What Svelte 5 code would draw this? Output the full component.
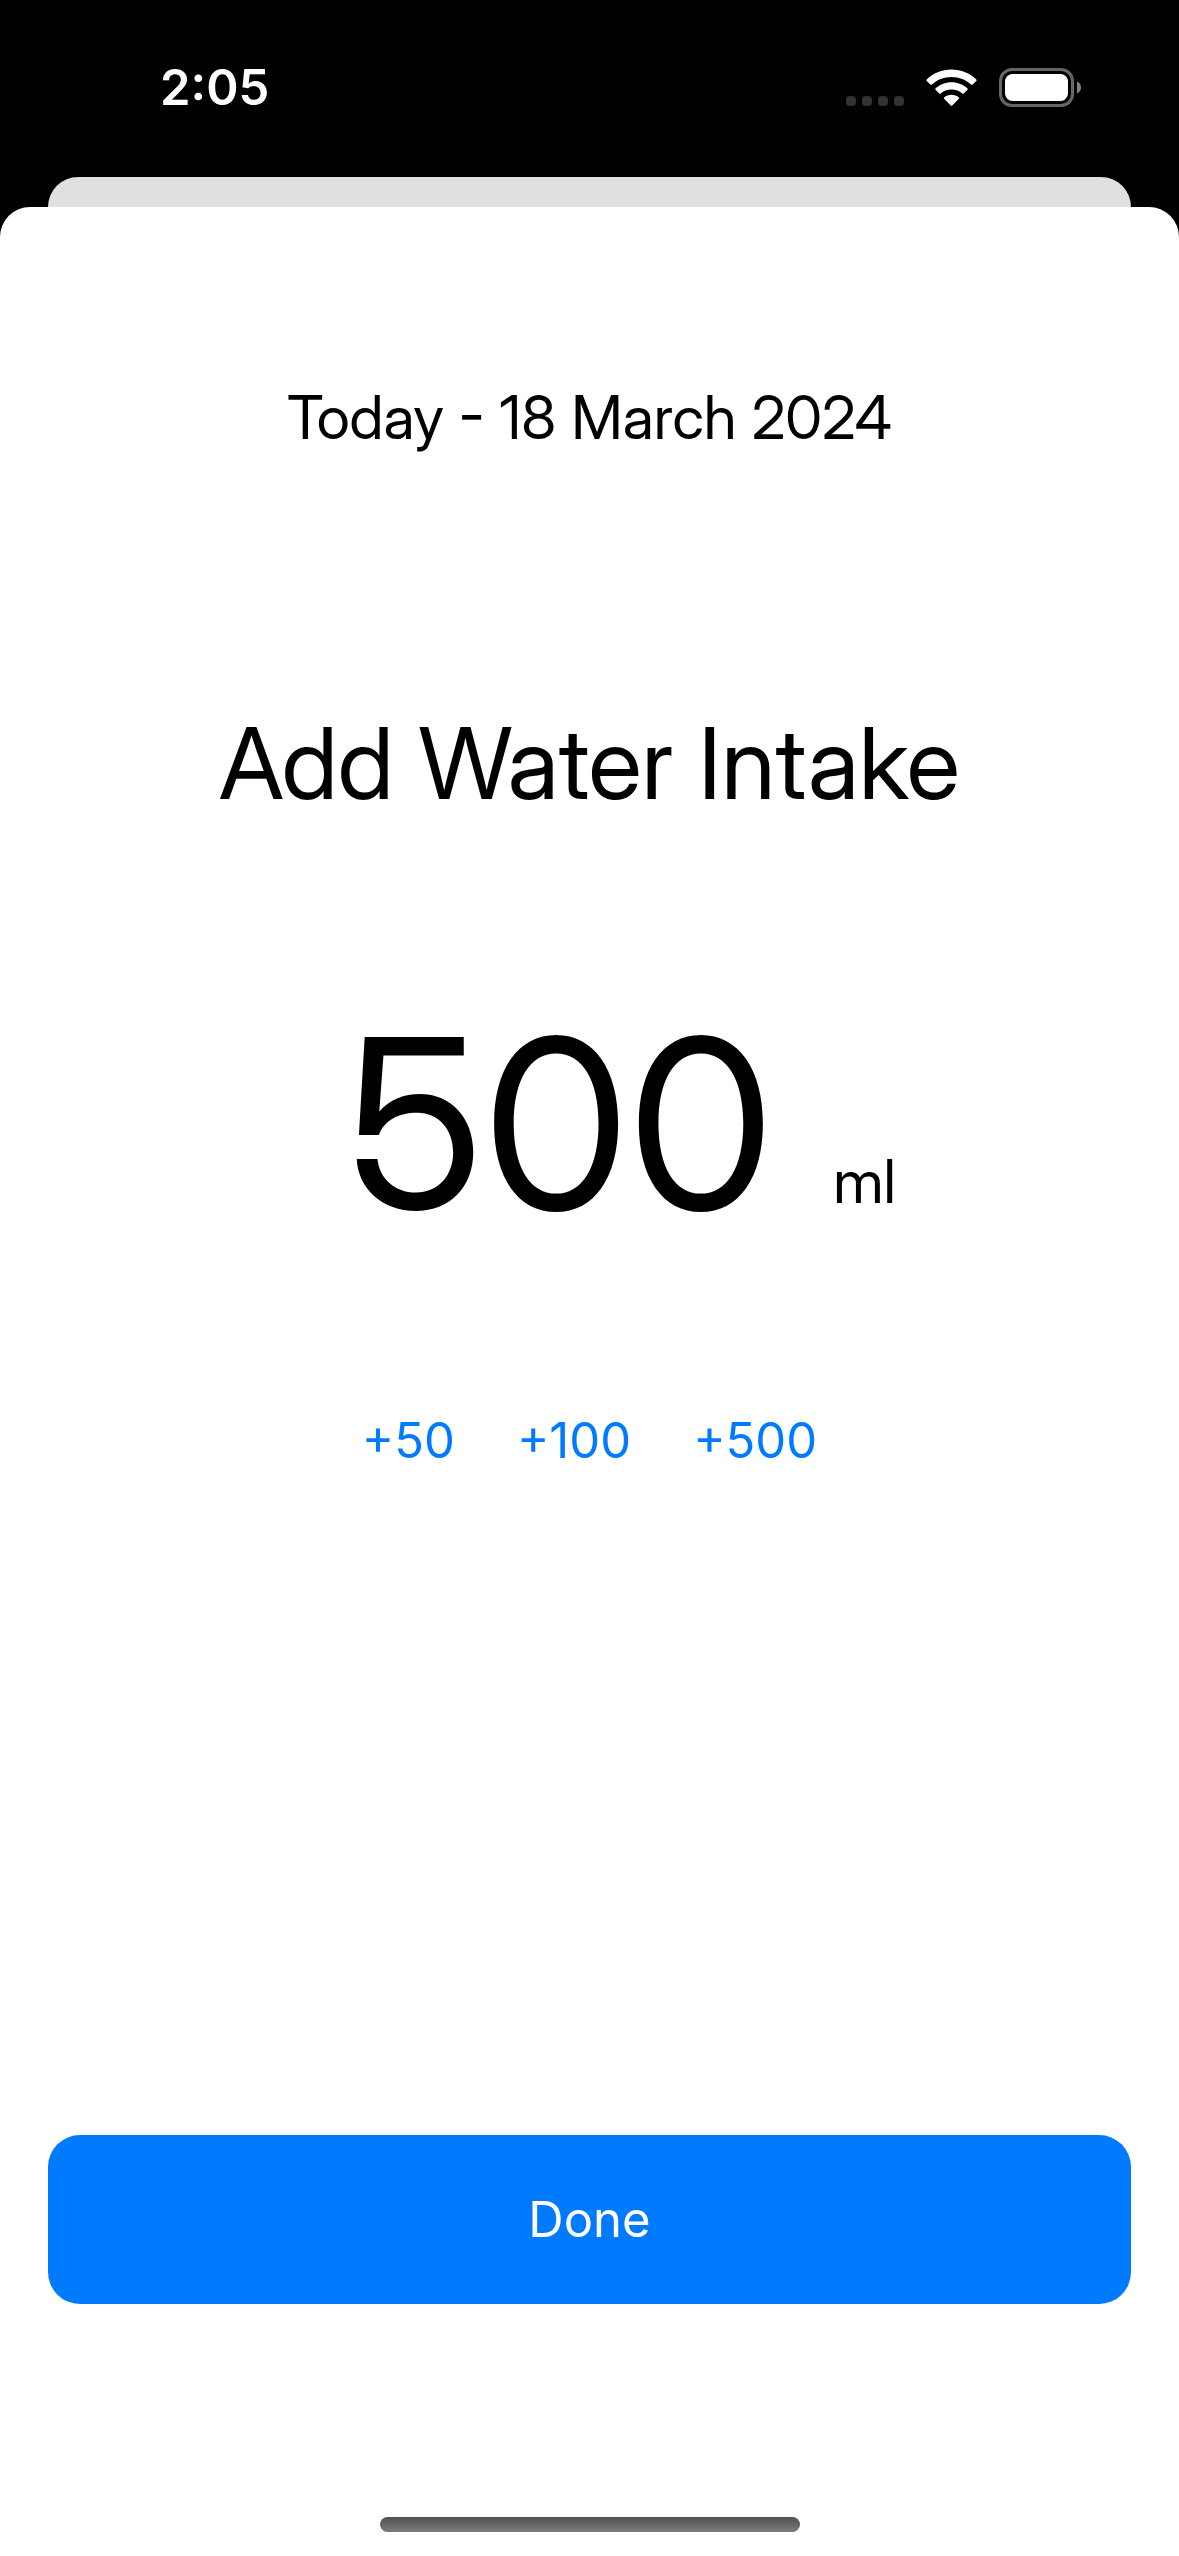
<script>
  let amount = $state('500');
  const steps = [50, 100, 500];

  function add(step) {
    amount = String((parseInt(amount, 10) || 0) + step);
  }
</script>

<div class="screen">
  <header class="status">
    <time class="clock">2:05</time>
    <div class="indicators">
      <svg class="cell" viewBox="0 0 58 10" aria-hidden="true">
        <rect x="0" y="0" width="10" height="10" rx="4" />
        <rect x="16" y="0" width="10" height="10" rx="4" />
        <rect x="32" y="0" width="10" height="10" rx="4" />
        <rect x="48" y="0" width="10" height="10" rx="4" />
      </svg>
      <svg class="wifi" viewBox="0 0 51 38" aria-hidden="true">
        <path d="M25.500 0.600C35.200 0.600 44 4.400 50.300 10.500Q51 11.200 50.300 11.900L46.600 15.600Q45.900 16.300 45.200 15.600C40 10.800 33.200 8 25.500 8C17.800 8 11 10.800 5.800 15.600Q5.100 16.300 4.400 15.600L0.700 11.900Q0 11.200 0.700 10.500C7 4.400 15.800 0.600 25.500 0.600Z" />
        <path d="M25.500 13.200C31.700 13.200 37.300 15.600 41.500 19.400Q42.200 20.100 41.500 20.800L37.700 24.500Q37 25.200 36.300 24.500C33.500 22 29.700 20.500 25.500 20.500C21.300 20.500 17.500 22 14.700 24.500Q14 25.200 13.300 24.500L9.500 20.800Q8.800 20.100 9.500 19.400C13.700 15.600 19.300 13.200 25.500 13.200Z" />
        <path d="M25.500 25.800C28.300 25.800 30.900 26.800 32.900 28.400Q33.600 29.100 32.900 29.800L26.200 36.600Q25.500 37.300 24.800 36.600L18.100 29.800Q17.400 29.100 18.100 28.400C20.100 26.800 22.700 25.800 25.500 25.800Z" />
      </svg>
      <svg class="battery" viewBox="0 0 82 40" aria-hidden="true">
        <rect class="shell" x="1.500" y="1.500" width="72" height="36" rx="11.500" />
        <rect class="charge" x="6" y="6" width="63" height="27" rx="7.500" />
        <path class="tip" d="M78 13.500C80.500 14.500 82 16.800 82 19.500S80.500 24.500 78 25.500Z" />
      </svg>
    </div>
  </header>

  <div class="behind"></div>

  <main class="sheet">
    <p class="date">Today - 18 March 2024</p>
    <h1 class="title">Add Water Intake</h1>
    <div class="entry">
      <input id="amount" class="amount" type="text" inputmode="numeric" bind:value={amount} />
      <label class="unit" for="amount">ml</label>
    </div>
    <div class="steps">
      {#each steps as step}
        <button type="button" class="step" onclick={() => add(step)}>+{step}</button>
      {/each}
    </div>
    <button type="button" class="done">Done</button>
    <div class="home"></div>
  </main>
</div>

<style>
  :global(body) {
    background: #000;
  }

  .screen {
    display: flex;
    flex-direction: column;
    min-height: 100vh;
    background: #000;
    color: #000;
    font-family: Inter, 'Liberation Sans', sans-serif;
  }

  button,
  input {
    margin: 0;
    padding: 0;
    border: 0;
    background: none;
    color: inherit;
    font: inherit;
  }

  .status {
    box-sizing: border-box;
    display: flex;
    align-items: center;
    justify-content: space-between;
    height: 177px;
    padding: 0 98px 1px 160px;
    color: #fff;
  }

  .clock {
    font-size: 49px;
    font-weight: 600;
    line-height: 60px;
  }

  .indicators {
    display: flex;
    align-items: center;
    gap: 22px;
  }

  .cell {
    width: 58px;
    height: 10px;
    align-self: flex-end;
    margin-bottom: 2px;
    fill: #333;
  }

  .wifi {
    width: 51px;
    height: 38px;
    fill: #fff;
  }

  .battery {
    width: 82px;
    height: 40px;
  }

  .shell {
    fill: none;
    stroke: #666;
    stroke-width: 3;
  }

  .charge {
    fill: #fff;
  }

  .tip {
    fill: #808080;
  }

  .behind {
    height: 30px;
    margin: 0 48px;
    border-radius: 30px 30px 0 0;
    background: #e0e0e0;
  }

  .sheet {
    flex: 1;
    display: flex;
    flex-direction: column;
    align-items: center;
    padding: 174px 48px 24px;
    border-radius: 30px 30px 0 0;
    background: #fff;
  }

  .date,
  .title,
  .entry {
    font-family: 'Inter Display', Inter, 'Liberation Sans', sans-serif;
  }

  .date,
  .unit {
    font-size: 60px;
    line-height: 72px;
  }

  .date {
    margin: 0;
  }

  .title {
    margin: 250px 0 0;
    font-size: 99px;
    font-weight: 400;
    line-height: 120px;
  }

  .entry {
    display: flex;
    align-items: flex-end;
    gap: 60px;
    margin-top: 160px;
  }

  .amount {
    width: 490px;
    height: 280px;
    font-size: 236px;
    line-height: 280px;
    text-align: right;
    outline: none;
  }

  .unit {
    padding-bottom: 46px;
  }

  .steps {
    display: flex;
    gap: 62px;
    margin-top: 148px;
    color: #007aff;
  }

  .step,
  .done {
    font-size: 49px;
    line-height: 60px;
    cursor: pointer;
  }

  .done {
    width: 100%;
    height: 169px;
    margin-top: auto;
    border-radius: 32px;
    background: #007aff;
    color: #fff;
  }

  .home {
    width: 420px;
    height: 15px;
    margin-top: 213px;
    border-radius: 8px;
    background: linear-gradient(#505050, #7c7c7c);
  }
</style>
